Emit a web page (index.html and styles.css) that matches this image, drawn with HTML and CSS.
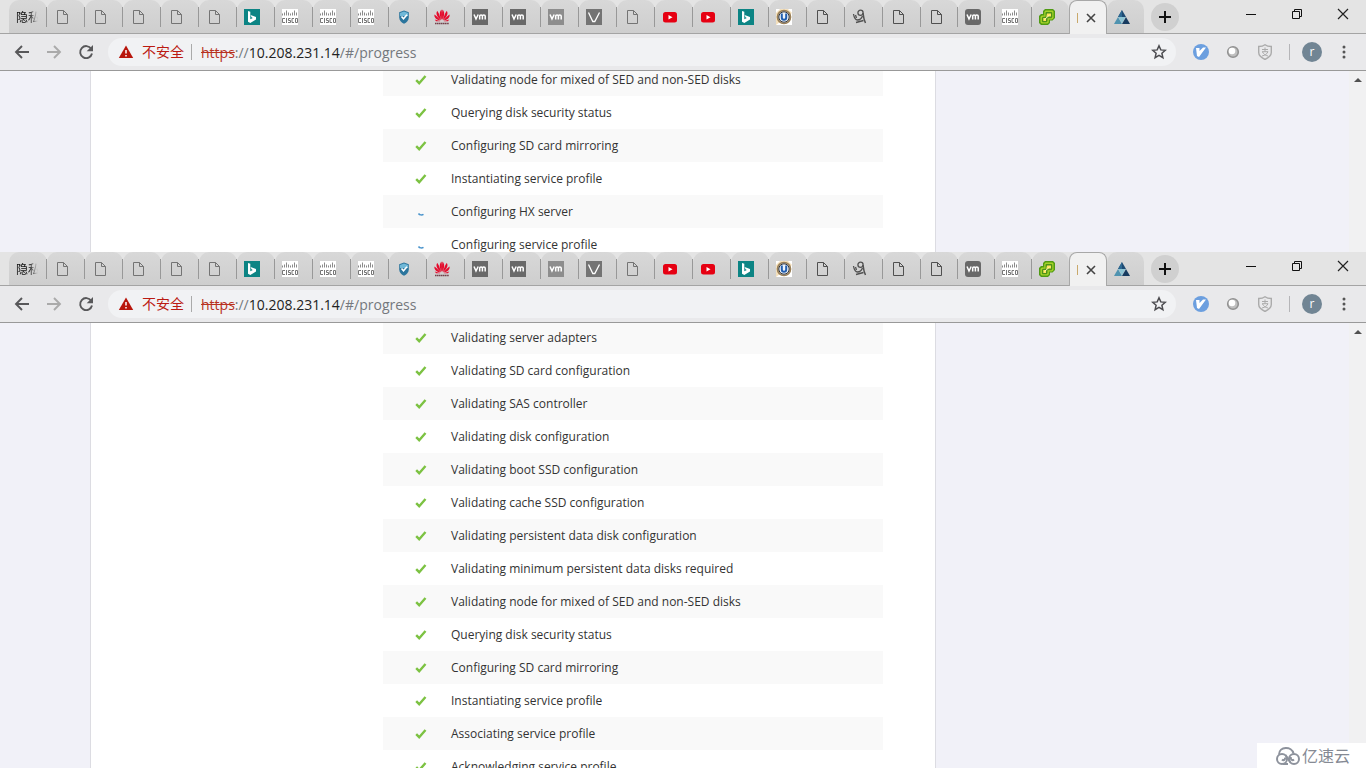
FILE: index.html
```html
<!DOCTYPE html>
<html lang="zh-CN">
<head>
<meta charset="utf-8">
<title>HX Installer Progress</title>
<link rel="stylesheet" href="styles.css">
</head>
<body>
<svg class="sprite" aria-hidden="true">
  <symbol id="doc" viewBox="0 0 16 16"><path d="M3.500 1.500h6l4 4v9h-10zM9.500 1.500v4h4" fill="none" stroke="#747474"/></symbol>
  <symbol id="doc-dark" viewBox="0 0 16 16"><path d="M3.500 1.500h6l4 4v9h-10zM9.500 1.500v4h4" fill="none" stroke="#505050"/></symbol>
  <symbol id="bing" viewBox="0 0 16 16"><path fill="#0c8484" d="M0 0h16v16H0z"/><path fill="#fff" d="M4 2l2.300.8v7.500l2.500-1.400-1.300-.6-.9-2.200 5.400 1.900v2.600L6.300 14 4 12.700z"/></symbol>
  <symbol id="cisco" viewBox="0 0 16 16"><path fill="#fff" d="M0 0h16v16H0z"/><path stroke="#8a8a8a" d="M.5 4.500v2M2.500 3.500v3M4.500 1.500v5M6.500 3.500v3M8.500 4.500v2M10.500 3.500v3M12.500 1.500v5M14.500 3.500v3"/><path fill="none" stroke="#777" d="M3 9.500H.5v4H3M4.500 9v5M8.500 9.500h-2v2h2v2h-2.500M12 9.500h-2v4h2M13.500 9.500h2v4h-2z"/></symbol>
  <symbol id="shield" viewBox="0 0 16 16"><path fill="#2b759d" d="M8 1.500l4.800 1.700v5c0 3.400-2.200 5.300-4.800 6.600-2.600-1.300-4.800-3.200-4.800-6.600v-5z"/><path fill="#70b8d8" d="M8 2.500l4 1.400V7H4V3.900z"/><path fill="none" stroke="#fff" stroke-width="1.600" d="M5.500 7.500l2 2.300 3.500-4"/></symbol>
  <symbol id="huawei" viewBox="0 0 16 16"><g fill="#e40b2c"><path d="M7.700 11C5.500 7 5 3 7.500.5 8.200 4 8 7 7.700 11zM8.300 11c2.200-4 2.700-8 .2-10.500C7.800 4 8 7 8.300 11zM7.100 11.200C5.800 6 4 2.500 3.200 2 1.500 4.500 3 8 7.100 11.200zM8.900 11.200C10.200 6 12 2.500 12.800 2c1.700 2.500.2 6-3.900 9.200zM6.500 11.500C4 8.200 1.500 6 .4 5.500 0 8.500 2.500 11 6.500 11.500zM9.500 11.500c2.500-3.300 5-5.500 6.100-6 .4 3-2.100 5.500-6.100 6zM6.500 12.300H2L.8 10.400zM9.500 12.300H14l1.200-1.900z"/></g><path d="M1 14.500h14" stroke="#72414a" stroke-width="1.500" stroke-dasharray="1.500 .4"/></symbol>
  <symbol id="vm" viewBox="0 0 16 16"><path fill="#696969" d="M0 0h16v16H0z"/><path fill="none" stroke="#fff" stroke-width="1.500" d="M2 5.500l2 4.500 2.200-4.500M7.700 10.500V7c0-1.500 2.700-1.500 2.700 0v3.500M10.400 7c0-1.500 2.800-1.500 2.800 0v3.500"/></symbol>
  <symbol id="vm-light" viewBox="0 0 16 16"><path fill="#8d8d8d" d="M0 0h16v16H0z"/><path fill="none" stroke="#fff" stroke-width="1.500" d="M2 5.500l2 4.500 2.200-4.500M7.700 10.500V7c0-1.500 2.700-1.500 2.700 0v3.500M10.400 7c0-1.500 2.800-1.500 2.800 0v3.500"/></symbol>
  <symbol id="vm-round" viewBox="0 0 16 16"><rect width="16" height="16" rx="3" fill="#696969"/><path fill="none" stroke="#fff" stroke-width="1.500" d="M2 5.500l2 4.500 2.200-4.500M7.700 10.500V7c0-1.500 2.700-1.500 2.700 0v3.500M10.400 7c0-1.500 2.800-1.500 2.800 0v3.500"/></symbol>
  <symbol id="vee" viewBox="0 0 16 16"><path fill="#747474" d="M0 0h16v16H0z"/><path fill="none" stroke="#fff" stroke-width="1.300" d="M2.500 3.500l4.300 9h2l4.700-9"/></symbol>
  <symbol id="youtube" viewBox="0 0 16 16"><rect x="1" y="3" width="14" height="10.500" rx="2.500" fill="#e60012"/><path fill="#fff" d="M6.500 6l4 2.200-4 2.200z"/></symbol>
  <symbol id="ubadge" viewBox="0 0 16 16"><path fill="#fff" d="M0 0h16v16H0z"/><path fill="#e9c27c" d="M0 16V4l4-4h8l4 4z" opacity=".5"/><circle cx="8" cy="8" r="6.500" fill="#eef3fa" stroke="#9a8058" stroke-width="1.700"/><circle cx="8" cy="8" r="5.200" fill="none" stroke="#2d333e"/><path d="M5.800 4.500v4c0 3 4.400 3 4.400 0v-4" fill="none" stroke="#225fb0" stroke-width="2"/></symbol>
  <symbol id="figure" viewBox="0 0 16 16"><path d="M1.500 5c.5 3 1.500 6 4 6 2.500 0 4-1.500 5-4M3.500 6l1 3M4 13.500l7.500-2" fill="none" stroke="#515151" stroke-width="1.300"/><circle cx="8.500" cy="3.800" r="2.600" fill="none" stroke="#515151" stroke-width="1.300"/><path d="M11 4c.5 4 1 7 2.500 10" fill="none" stroke="#515151" stroke-width="1.500"/></symbol>
  <symbol id="vsphere" viewBox="0 0 16 16"><path fill="#4f9a13" d="M6 0h8l2 2v7l-2.500 2.500H11V14l-2 2H2l-2-2V7l2-2h2V2z"/><path fill="#a6d329" d="M6.500 1.500h7l1 1V9l-1.500 1.500H9.800v2.700l-1.300 1.300H2.700l-1.200-1.200V7.800L3 6.500h2.300V3z"/><path fill="#4c921a" d="M7 3h5.500l.8.800V8l-1 1.200H8.500v3l-1 1H3.700l-.8-.8V8.800L4 7.800h2.500V3.700z"/><path fill="#ffe45b" d="M8 4.500h4v3H8L7 9v3H4.300V9H7z"/><path d="M5.500 10.500l5-4.500" stroke="#fff7b7"/></symbol>
  <symbol id="triangle" viewBox="0 0 16 16"><path fill="#1d4a73" d="M8 1l4 7H4z"/><path fill="#8cc4d4" d="M4.500 8h7L8 14.500z"/><path fill="#4f93b0" d="M0 15l4-7 4 7z"/><path fill="#173b60" d="M8 15l4-7 4 7z"/><path fill="#2d6892" d="M8 1v7H4z"/></symbol>
  <symbol id="check" viewBox="0 0 12 12"><path d="M1.200 6.200l3 3L10.500 2" fill="none" stroke="#7cc242" stroke-width="2.400"/></symbol>
  <symbol id="spin" viewBox="0 0 12 12"><path d="M3.500 7.500c1 1.600 3.500 1.800 5 .8" fill="none" stroke="#4a94cc" stroke-width="1.500"/></symbol>
  <symbol id="back" viewBox="0 0 16 16"><path d="M15 8H2M8 2L2 8l6 6" fill="none" stroke="currentColor" stroke-width="1.900"/></symbol>
  <symbol id="forward" viewBox="0 0 16 16"><path d="M1 8h13M8 2l6 6-6 6" fill="none" stroke="currentColor" stroke-width="1.900"/></symbol>
  <symbol id="reload" viewBox="0 0 16 16"><path d="M13.200 4.800A6 6 0 1 0 14 9.500" fill="none" stroke="currentColor" stroke-width="1.900"/><path fill="currentColor" d="M15 1v6.300H8.700z"/></symbol>
  <symbol id="warn" viewBox="0 0 16 16"><path fill="#b8160c" d="M8 1.500L15.200 14H.8z"/><path stroke="#fff" stroke-width="1.500" d="M8 6v3.500M8 11v1.500"/></symbol>
  <symbol id="star" viewBox="0 0 16 16"><path d="M8 1.800l1.800 4.100 4.500.4-3.400 3 1 4.400L8 11.400l-3.900 2.300 1-4.400-3.400-3 4.500-.4z" fill="none" stroke="#4c4c50" stroke-width="1.500"/></symbol>
  <symbol id="ext-blue" viewBox="0 0 16 16"><circle cx="8" cy="8" r="8" fill="#6c9fdf"/><path d="M3 4h3.500v3L10 3.500h3L6 13l-2-1z" fill="#fff"/></symbol>
  <symbol id="ext-ball" viewBox="0 0 16 16"><circle cx="8" cy="8" r="5.300" fill="#c0c0c0" stroke="#929292" stroke-width="1.600"/><circle cx="7" cy="7" r="3.300" fill="#fff"/></symbol>
  <symbol id="ext-shield" viewBox="0 0 16 16"><path d="M8 .8c2 1.500 4 1.700 6.300 1.700v6c0 3.500-3.300 5.500-6.300 7-3-1.500-6.300-3.500-6.300-7v-6C4 2.500 6 2.300 8 .8z" fill="none" stroke="#ababab" stroke-width="1.400"/><path d="M5 5.500h6M8 3.500v4M5 7.700h6c-1 2.500-3 3.500-6 4.300M5.500 8c1 2 3 3.500 5.500 4" fill="none" stroke="#ababab"/></symbol>
  <symbol id="min" viewBox="0 0 12 12"><path d="M1 6.500h10" stroke="#111"/></symbol>
  <symbol id="restore" viewBox="0 0 12 12"><path d="M1.500 3.500h7v7h-7zM3.500 3.500v-2h7v7h-2" fill="none" stroke="#111"/></symbol>
  <symbol id="close" viewBox="0 0 12 12"><path d="M1 1l10 10M11 1L1 11" fill="none" stroke="#222" stroke-width="1.200"/></symbol>
  <symbol id="cross" viewBox="0 0 12 12"><path d="M2 2l8 8M10 2l-8 8" fill="none" stroke="#444" stroke-width="1.600"/></symbol>
  <symbol id="plus" viewBox="0 0 12 12"><path d="M6 0v12M0 6h12" stroke="#111" stroke-width="2"/></symbol>
  <symbol id="more" viewBox="0 0 16 16"><g fill="#555"><circle cx="8" cy="3" r="1.500"/><circle cx="8" cy="8" r="1.500"/><circle cx="8" cy="13" r="1.500"/></g></symbol>
  <symbol id="up" viewBox="0 0 16 16"><path fill="#505050" d="M4 9l4-4 4 4z"/></symbol>
  <symbol id="cloud" viewBox="0 0 26 20"><g fill="none" stroke="#8d929c" stroke-width="2"><circle cx="7" cy="13" r="5"/><path d="M7 13.500c1.500 1.500 3.500 0 3-2M4 8.500C4 0 17 0 18.500 7.500"/><circle cx="19" cy="13" r="5"/><path d="M19 13.500c-1.500 1.500-4 0-3-2.500M10.500 9l5 7.500M8 18h5"/></g></symbol>
</svg>

<section class="browser">
  <header class="tabstrip">
    <nav class="tabs" aria-label="Tabs">
      <button class="tab tab-text"><span>隐私</span></button>
      <button class="tab"><svg><use href="#doc"/></svg></button>
      <button class="tab"><svg><use href="#doc"/></svg></button>
      <button class="tab"><svg><use href="#doc"/></svg></button>
      <button class="tab"><svg><use href="#doc"/></svg></button>
      <button class="tab"><svg><use href="#doc"/></svg></button>
      <button class="tab"><svg><use href="#bing"/></svg></button>
      <button class="tab"><svg><use href="#cisco"/></svg></button>
      <button class="tab"><svg><use href="#cisco"/></svg></button>
      <button class="tab"><svg><use href="#cisco"/></svg></button>
      <button class="tab"><svg><use href="#shield"/></svg></button>
      <button class="tab"><svg><use href="#huawei"/></svg></button>
      <button class="tab"><svg><use href="#vm"/></svg></button>
      <button class="tab"><svg><use href="#vm"/></svg></button>
      <button class="tab"><svg><use href="#vm-light"/></svg></button>
      <button class="tab"><svg><use href="#vee"/></svg></button>
      <button class="tab"><svg><use href="#doc"/></svg></button>
      <button class="tab"><svg><use href="#youtube"/></svg></button>
      <button class="tab"><svg><use href="#youtube"/></svg></button>
      <button class="tab"><svg><use href="#bing"/></svg></button>
      <button class="tab"><svg><use href="#ubadge"/></svg></button>
      <button class="tab"><svg><use href="#doc-dark"/></svg></button>
      <button class="tab"><svg><use href="#figure"/></svg></button>
      <button class="tab"><svg><use href="#doc-dark"/></svg></button>
      <button class="tab tab-slim"><svg><use href="#doc-dark"/></svg></button>
      <button class="tab tab-slim"><svg><use href="#vm-round"/></svg></button>
      <button class="tab tab-slim"><svg><use href="#cisco"/></svg></button>
      <button class="tab tab-slim tab-last"><svg><use href="#vsphere"/></svg></button>
      <button class="tab tab-active"><i></i><svg class="small"><use href="#cross"/></svg></button>
      <button class="tab tab-slim tab-last"><svg><use href="#triangle"/></svg></button>
    </nav>
    <button class="new-tab" aria-label="New tab"><svg class="small"><use href="#plus"/></svg></button>
    <div class="window-controls">
      <button aria-label="Minimize"><svg class="small"><use href="#min"/></svg></button>
      <button aria-label="Restore"><svg class="small"><use href="#restore"/></svg></button>
      <button aria-label="Close"><svg class="small"><use href="#close"/></svg></button>
    </div>
  </header>
  <div class="toolbar">
    <button class="nav" aria-label="Back"><svg><use href="#back"/></svg></button>
    <button class="nav nav-off" aria-label="Forward"><svg><use href="#forward"/></svg></button>
    <button class="nav" aria-label="Reload"><svg><use href="#reload"/></svg></button>
    <div class="omnibox">
      <svg><use href="#warn"/></svg>
      <span class="insecure">不安全</span>
      <span class="url"><s>https</s>://<b>10.208.231.14</b>/#/progress</span>
      <button aria-label="Bookmark"><svg><use href="#star"/></svg></button>
    </div>
    <div class="extensions">
      <button aria-label="Blue extension"><svg><use href="#ext-blue"/></svg></button>
      <button aria-label="Ball extension"><svg><use href="#ext-ball"/></svg></button>
      <button aria-label="Shield extension"><svg><use href="#ext-shield"/></svg></button>
    </div>
    <button class="avatar">r</button>
    <button class="menu" aria-label="Menu"><svg><use href="#more"/></svg></button>
  </div>
  <main class="viewport">
    <div class="panel">
      <ul class="steps scrolled-far">
        <li><svg><use href="#check"/></svg>Validating node for mixed of SED and non-SED disks</li>
        <li><svg><use href="#check"/></svg>Querying disk security status</li>
        <li><svg><use href="#check"/></svg>Configuring SD card mirroring</li>
        <li><svg><use href="#check"/></svg>Instantiating service profile</li>
        <li><svg><use href="#spin"/></svg>Configuring HX server</li>
        <li><svg><use href="#spin"/></svg>Configuring service profile</li>
      </ul>
    </div>
    <div class="scrollbar"><svg><use href="#up"/></svg></div>
  </main>
</section>

<section class="browser">
  <header class="tabstrip">
    <nav class="tabs" aria-label="Tabs">
      <button class="tab tab-text"><span>隐私</span></button>
      <button class="tab"><svg><use href="#doc"/></svg></button>
      <button class="tab"><svg><use href="#doc"/></svg></button>
      <button class="tab"><svg><use href="#doc"/></svg></button>
      <button class="tab"><svg><use href="#doc"/></svg></button>
      <button class="tab"><svg><use href="#doc"/></svg></button>
      <button class="tab"><svg><use href="#bing"/></svg></button>
      <button class="tab"><svg><use href="#cisco"/></svg></button>
      <button class="tab"><svg><use href="#cisco"/></svg></button>
      <button class="tab"><svg><use href="#cisco"/></svg></button>
      <button class="tab"><svg><use href="#shield"/></svg></button>
      <button class="tab"><svg><use href="#huawei"/></svg></button>
      <button class="tab"><svg><use href="#vm"/></svg></button>
      <button class="tab"><svg><use href="#vm"/></svg></button>
      <button class="tab"><svg><use href="#vm-light"/></svg></button>
      <button class="tab"><svg><use href="#vee"/></svg></button>
      <button class="tab"><svg><use href="#doc"/></svg></button>
      <button class="tab"><svg><use href="#youtube"/></svg></button>
      <button class="tab"><svg><use href="#youtube"/></svg></button>
      <button class="tab"><svg><use href="#bing"/></svg></button>
      <button class="tab"><svg><use href="#ubadge"/></svg></button>
      <button class="tab"><svg><use href="#doc-dark"/></svg></button>
      <button class="tab"><svg><use href="#figure"/></svg></button>
      <button class="tab"><svg><use href="#doc-dark"/></svg></button>
      <button class="tab tab-slim"><svg><use href="#doc-dark"/></svg></button>
      <button class="tab tab-slim"><svg><use href="#vm-round"/></svg></button>
      <button class="tab tab-slim"><svg><use href="#cisco"/></svg></button>
      <button class="tab tab-slim tab-last"><svg><use href="#vsphere"/></svg></button>
      <button class="tab tab-active"><i></i><svg class="small"><use href="#cross"/></svg></button>
      <button class="tab tab-slim tab-last"><svg><use href="#triangle"/></svg></button>
    </nav>
    <button class="new-tab" aria-label="New tab"><svg class="small"><use href="#plus"/></svg></button>
    <div class="window-controls">
      <button aria-label="Minimize"><svg class="small"><use href="#min"/></svg></button>
      <button aria-label="Restore"><svg class="small"><use href="#restore"/></svg></button>
      <button aria-label="Close"><svg class="small"><use href="#close"/></svg></button>
    </div>
  </header>
  <div class="toolbar">
    <button class="nav" aria-label="Back"><svg><use href="#back"/></svg></button>
    <button class="nav nav-off" aria-label="Forward"><svg><use href="#forward"/></svg></button>
    <button class="nav" aria-label="Reload"><svg><use href="#reload"/></svg></button>
    <div class="omnibox">
      <svg><use href="#warn"/></svg>
      <span class="insecure">不安全</span>
      <span class="url"><s>https</s>://<b>10.208.231.14</b>/#/progress</span>
      <button aria-label="Bookmark"><svg><use href="#star"/></svg></button>
    </div>
    <div class="extensions">
      <button aria-label="Blue extension"><svg><use href="#ext-blue"/></svg></button>
      <button aria-label="Ball extension"><svg><use href="#ext-ball"/></svg></button>
      <button aria-label="Shield extension"><svg><use href="#ext-shield"/></svg></button>
    </div>
    <button class="avatar">r</button>
    <button class="menu" aria-label="Menu"><svg><use href="#more"/></svg></button>
  </div>
  <main class="viewport">
    <div class="panel">
      <ul class="steps scrolled-near">
        <li><svg><use href="#check"/></svg>Validating server adapters</li>
        <li><svg><use href="#check"/></svg>Validating SD card configuration</li>
        <li><svg><use href="#check"/></svg>Validating SAS controller</li>
        <li><svg><use href="#check"/></svg>Validating disk configuration</li>
        <li><svg><use href="#check"/></svg>Validating boot SSD configuration</li>
        <li><svg><use href="#check"/></svg>Validating cache SSD configuration</li>
        <li><svg><use href="#check"/></svg>Validating persistent data disk configuration</li>
        <li><svg><use href="#check"/></svg>Validating minimum persistent data disks required</li>
        <li><svg><use href="#check"/></svg>Validating node for mixed of SED and non-SED disks</li>
        <li><svg><use href="#check"/></svg>Querying disk security status</li>
        <li><svg><use href="#check"/></svg>Configuring SD card mirroring</li>
        <li><svg><use href="#check"/></svg>Instantiating service profile</li>
        <li><svg><use href="#check"/></svg>Associating service profile</li>
        <li><svg><use href="#check"/></svg>Acknowledging service profile</li>
      </ul>
    </div>
    <div class="scrollbar"><svg><use href="#up"/></svg></div>
  </main>
</section>
<div class="watermark"><svg><use href="#cloud"/></svg><span>亿速云</span></div>
</body>
</html>
```
FILE: styles.css
```css
* { box-sizing: border-box; }
body {
  margin: 0;
  height: 100vh;
  display: grid;
  grid-template-rows: 252px 1fr;
  overflow: hidden;
  font-family: "Open Sans", "Noto Sans CJK SC", sans-serif;
}
button { border: 0; padding: 0; background: none; font: inherit; color: inherit; }
svg { display: block; flex: none; width: 16px; height: 16px; }
svg.small { width: 12px; height: 12px; }
svg.sprite { position: absolute; width: 0; height: 0; }

.browser { display: flex; flex-direction: column; min-height: 0; overflow: hidden; }

.tabstrip {
  display: flex;
  flex: none;
  height: 34px;
  padding-left: 9px;
  background: #e4e4e4;
  border-bottom: 1px solid #a4a4a4;
}
.tabs { display: flex; }
.tab {
  display: flex;
  align-items: center;
  width: 38px;
  height: 33px;
  padding: 0 0 0 7px;
  border-radius: 10px 10px 0 0;
  background: linear-gradient(#d8d8d8, #cecece);
}
.tab::after { content: ""; width: 1px; height: 20px; margin-left: auto; background: #989898; }
.tab-slim { width: 37px; }
.tab-last::after { display: none; }
.tab-text span {
  width: 22px;
  overflow: hidden;
  white-space: nowrap;
  font-size: 12px;
  color: #111;
  mask-image: linear-gradient(90deg, #000 60%, transparent);
}
.tab-active {
  height: 34px;
  padding-right: 9px;
  justify-content: space-between;
  border: 1px solid #a8a8a8;
  border-bottom: 0;
  border-radius: 8px 8px 0 0;
  background: #f1f1f1;
}
.tab-active::after { display: none; }
.tab-active i { width: 1px; height: 10px; background: #c9a96b; }
.new-tab {
  display: grid;
  place-items: center;
  width: 28px;
  height: 28px;
  margin: 3px 0 0 7px;
  border-radius: 50%;
  background: #d0d0d0;
}
.window-controls { display: flex; margin-left: auto; height: 28px; }
.window-controls button { display: grid; place-items: center; width: 46px; }

.toolbar {
  display: flex;
  flex: none;
  align-items: center;
  height: 37px;
  padding: 0 14px;
  background: #e9e9eb;
  border-bottom: 1px solid #999;
  color: #58585a;
}
.nav { margin-right: 16px; }
.nav:nth-child(3) { margin-right: 14px; }
.nav-off { color: #aaa; }
.omnibox {
  display: flex;
  flex: 1;
  align-items: center;
  height: 28px;
  padding: 0 9px 0 10px;
  border-radius: 14px;
  background: #f1f2f4;
}
.insecure {
  margin-left: 8px;
  padding-right: 7px;
  border-right: 1px solid #aaa;
  font-size: 14px;
  line-height: 16px;
  color: #bb1a12;
}
.url { margin-left: 9px; font-size: 14px; color: #74787d; }
.url s { color: #b8321f; }
.url b { font-weight: 400; color: #222; }
.omnibox button { margin-left: auto; }
.extensions { display: flex; gap: 16px; margin-left: 17px; padding-right: 16px; border-right: 1px solid #b5b5b8; }
.avatar {
  width: 20px;
  height: 20px;
  margin-left: 12px;
  border-radius: 50%;
  background: #718594;
  color: #fff;
  font-size: 12px;
  line-height: 18px;
}
.menu { margin-left: 14px; }

.viewport { display: flex; flex: 1; min-height: 0; overflow: hidden; background: #f1f1f8; }
.panel {
  width: 846px;
  margin-left: 90px;
  padding-left: 292px;
  border: solid #dcdce2;
  border-width: 0 1px;
  background: #fff;
}
.steps { width: 500px; margin: 0; padding: 0; list-style: none; }
.scrolled-far { margin-top: -8px; }
.scrolled-near { margin-top: -2px; }
.steps li {
  display: flex;
  align-items: center;
  gap: 24px;
  height: 33px;
  padding-left: 32px;
  font-size: 12px;
  color: #333;
}
.steps li:nth-child(odd) { background: #f9f9f9; }
.steps svg { width: 12px; height: 12px; }
.scrollbar { width: 17px; margin-left: auto; padding: 2px 0 0 1px; background: #f1f1f2; }

.watermark {
  position: fixed;
  right: 0;
  bottom: 0;
  display: flex;
  align-items: center;
  gap: 1px;
  width: 109px;
  height: 25px;
  padding-left: 18px;
  background: #fff;
  color: #858a94;
  font-size: 16px;
  line-height: 24px;
}
.watermark svg { width: 26px; height: 20px; }
```
